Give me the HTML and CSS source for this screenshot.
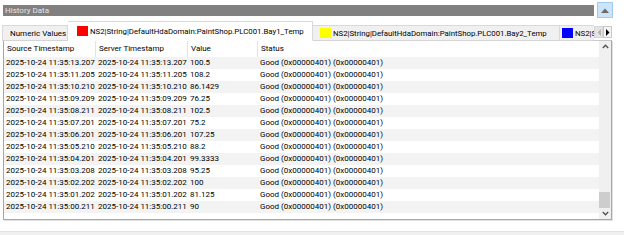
FILE: index.html
```html
<!DOCTYPE html>
<html lang="en">
<head>
<meta charset="utf-8">
<title>History Data</title>
<link rel="stylesheet" href="styles.css">
</head>
<body>
<div class="window">
  <div class="titlebar">
    <div class="title">History Data</div>
    <div class="collapse">
      <svg width="8" height="5" viewBox="0 0 8 5"><polygon points="0,5 8,5 4,0.5" fill="#6b6b6b"/></svg>
    </div>
  </div>
  <div class="tabstrip">
    <div class="tabs">
      <div class="tab t-numeric">Numeric Values</div>
      <div class="tab active t-bay1"><span class="swatch red"></span>NS2|String|DefaultHdaDomain:PaintShop.PLC001.Bay1_Temp</div>
      <div class="tab t-bay2"><span class="swatch yellow"></span>NS2|String|DefaultHdaDomain:PaintShop.PLC001.Bay2_Temp</div>
      <div class="tab t-bay3"><span class="swatch blue"></span><span class="clip">NS2|String|DefaultHdaDomain:PaintShop.PLC001.Bay3_Temp</span></div>
    </div>
    <div class="tabscroll">
      <div class="tsbtn disabled"><svg width="4" height="7" viewBox="0 0 4 7"><polygon points="4,0 4,7 0.5,3.5" fill="#b4b4b4"/></svg></div>
      <div class="tsbtn"><svg width="4" height="7" viewBox="0 0 4 7"><polygon points="0,0 0,7 3.5,3.5" fill="#000"/></svg></div>
    </div>
  </div>
  <div class="gridbox">
    <div class="grid">
      <div class="row head">
        <div class="cell">Source Timestamp</div>
        <div class="cell">Server Timestamp</div>
        <div class="cell">Value</div>
        <div class="cell">Status</div>
      </div>
      <div class="row"><div class="cell">2025-10-24 11:35:13.207</div><div class="cell">2025-10-24 11:35:13.207</div><div class="cell">100.5</div><div class="cell">Good (0x00000401) (0x00000401)</div></div>
      <div class="row"><div class="cell">2025-10-24 11:35:11.205</div><div class="cell">2025-10-24 11:35:11.205</div><div class="cell">108.2</div><div class="cell">Good (0x00000401) (0x00000401)</div></div>
      <div class="row"><div class="cell">2025-10-24 11:35:10.210</div><div class="cell">2025-10-24 11:35:10.210</div><div class="cell">86.1429</div><div class="cell">Good (0x00000401) (0x00000401)</div></div>
      <div class="row"><div class="cell">2025-10-24 11:35:09.209</div><div class="cell">2025-10-24 11:35:09.209</div><div class="cell">76.25</div><div class="cell">Good (0x00000401) (0x00000401)</div></div>
      <div class="row"><div class="cell">2025-10-24 11:35:08.211</div><div class="cell">2025-10-24 11:35:08.211</div><div class="cell">102.5</div><div class="cell">Good (0x00000401) (0x00000401)</div></div>
      <div class="row"><div class="cell">2025-10-24 11:35:07.201</div><div class="cell">2025-10-24 11:35:07.201</div><div class="cell">75.2</div><div class="cell">Good (0x00000401) (0x00000401)</div></div>
      <div class="row"><div class="cell">2025-10-24 11:35:06.201</div><div class="cell">2025-10-24 11:35:06.201</div><div class="cell">107.25</div><div class="cell">Good (0x00000401) (0x00000401)</div></div>
      <div class="row"><div class="cell">2025-10-24 11:35:05.210</div><div class="cell">2025-10-24 11:35:05.210</div><div class="cell">88.2</div><div class="cell">Good (0x00000401) (0x00000401)</div></div>
      <div class="row"><div class="cell">2025-10-24 11:35:04.201</div><div class="cell">2025-10-24 11:35:04.201</div><div class="cell">99.3333</div><div class="cell">Good (0x00000401) (0x00000401)</div></div>
      <div class="row"><div class="cell">2025-10-24 11:35:03.208</div><div class="cell">2025-10-24 11:35:03.208</div><div class="cell">95.25</div><div class="cell">Good (0x00000401) (0x00000401)</div></div>
      <div class="row"><div class="cell">2025-10-24 11:35:02.202</div><div class="cell">2025-10-24 11:35:02.202</div><div class="cell">100</div><div class="cell">Good (0x00000401) (0x00000401)</div></div>
      <div class="row"><div class="cell">2025-10-24 11:35:01.202</div><div class="cell">2025-10-24 11:35:01.202</div><div class="cell">81.125</div><div class="cell">Good (0x00000401) (0x00000401)</div></div>
      <div class="row"><div class="cell">2025-10-24 11:35:00.211</div><div class="cell">2025-10-24 11:35:00.211</div><div class="cell">90</div><div class="cell">Good (0x00000401) (0x00000401)</div></div>
    </div>
    <div class="vscroll">
      <div class="sarrow"><svg width="7" height="5" viewBox="0 0 7 5"><polyline points="0.8,4 3.5,1.2 6.2,4" fill="none" stroke="#505050" stroke-width="1.3"/></svg></div>
      <div class="track"><div class="thumb"></div></div>
      <div class="sarrow"><svg width="7" height="5" viewBox="0 0 7 5"><polyline points="0.8,1 3.5,3.8 6.2,1" fill="none" stroke="#505050" stroke-width="1.3"/></svg></div>
    </div>
  </div>
  <div class="footer"></div>
</div>
</body>
</html>
```
FILE: styles.css
```css
html, body {
  margin: 0;
  padding: 0;
  background: #ffffff;
}
body {
  width: 624px;
  height: 235px;
  overflow: hidden;
  font-family: Roboto, "Noto Sans", sans-serif;
  font-size: 8px;
  color: #000;
}
.window {
  padding: 2px 11px 0 2px;
}
.titlebar {
  display: flex;
  align-items: center;
  gap: 3px;
  height: 16px;
}
.title {
  flex: 1;
  margin-left: 1px;
  height: 11px;
  line-height: 11px;
  background: #808080;
  color: #e6e6e6;
  padding-left: 2px;
}
.collapse {
  width: 16px;
  height: 16px;
  box-sizing: border-box;
  border: 1px solid #9fcbed;
  background: #cce4f7;
  display: flex;
  align-items: center;
  justify-content: center;
}
.tabstrip {
  margin-top: 3px;
  height: 19px;
  display: flex;
  align-items: flex-end;
  position: relative;
  z-index: 1;
}
.tabs {
  flex: 1;
  display: flex;
  align-items: flex-end;
  overflow: hidden;
  height: 20px;
  margin-bottom: -1px;
}
.tab {
  flex-shrink: 0;
  box-sizing: border-box;
  height: 16px;
  border: 1px solid #d9d9d9;
  border-bottom: 1px solid #d4d4d4;
  background: #f0f0f0;
  display: flex;
  align-items: center;
  white-space: nowrap;
  padding: 0 0 0 7px;
  font-size: 7.8px;
}
.tab.active {
  height: 20px;
  background: #ffffff;
  border-bottom-color: #ffffff;
  padding-left: 9px;
}
.t-numeric { width: 66px; font-size: 8px; }
.t-bay1 { width: 245px; border-left: none; }
.t-bay2 { width: 247px; border-left: none; }
.t-bay3 { width: 40px; border-left: none; border-right: none; padding-left: 2px; overflow: hidden; }
.clip { overflow: hidden; }
.swatch {
  display: inline-block;
  width: 11px;
  height: 10px;
  margin-right: 2px;
  flex-shrink: 0;
}
.red { background: #ff0000; }
.yellow { background: #ffff00; }
.blue { background: #0000ff; }
.tabscroll {
  display: flex;
  margin: 0 1px 2px 0;
  height: 12px;
}
.tsbtn {
  width: 9px;
  height: 12px;
  box-sizing: border-box;
  border: 1px solid #c8c8c8;
  background: #f4f4f4;
  display: flex;
  align-items: center;
  justify-content: center;
}
.tsbtn.disabled {
  background: #e4e4e4;
  border-color: #d6d6d6;
}
.gridbox {
  margin-left: 1px;
  margin-right: 1px;
  height: 180px;
  box-sizing: border-box;
  border: 1px solid #a6a6a6;
  border-top-color: #c8c8c8;
  box-shadow: 1px 1px 0 #e2e2e2;
  display: flex;
}
.grid {
  flex: 1;
  display: flex;
  flex-direction: column;
}
.row {
  display: grid;
  grid-template-columns: 92px 92px 70px 1fr;
  height: 12px;
  line-height: 12px;
  white-space: nowrap;
}
.row .cell {
  padding-left: 2px;
  overflow: hidden;
}
.row:nth-child(even) {
  background: #f3f3f3;
}
.row.head {
  height: 16px;
  line-height: 16px;
  background: #ffffff;
}
.row.head .cell {
  padding-left: 3px;
  border-right: 1px solid #e3e3e3;
}
.row.head .cell:last-child {
  border-right: none;
}
.vscroll {
  width: 12px;
  background: #f0f0f0;
  display: flex;
  flex-direction: column;
}
.sarrow {
  height: 11px;
  display: flex;
  align-items: center;
  justify-content: center;
}
.track {
  flex: 1;
  display: flex;
  flex-direction: column;
  justify-content: flex-end;
  padding: 0 1px 0 0;
}
.thumb {
  height: 16px;
  background: #cdcdcd;
}
.footer {
  margin-top: 11px;
  margin-right: -11px;
  margin-left: -2px;
  height: 4px;
  background: #f0f0f0;
  border-top: 1px solid #e3e3e3;
}
```
